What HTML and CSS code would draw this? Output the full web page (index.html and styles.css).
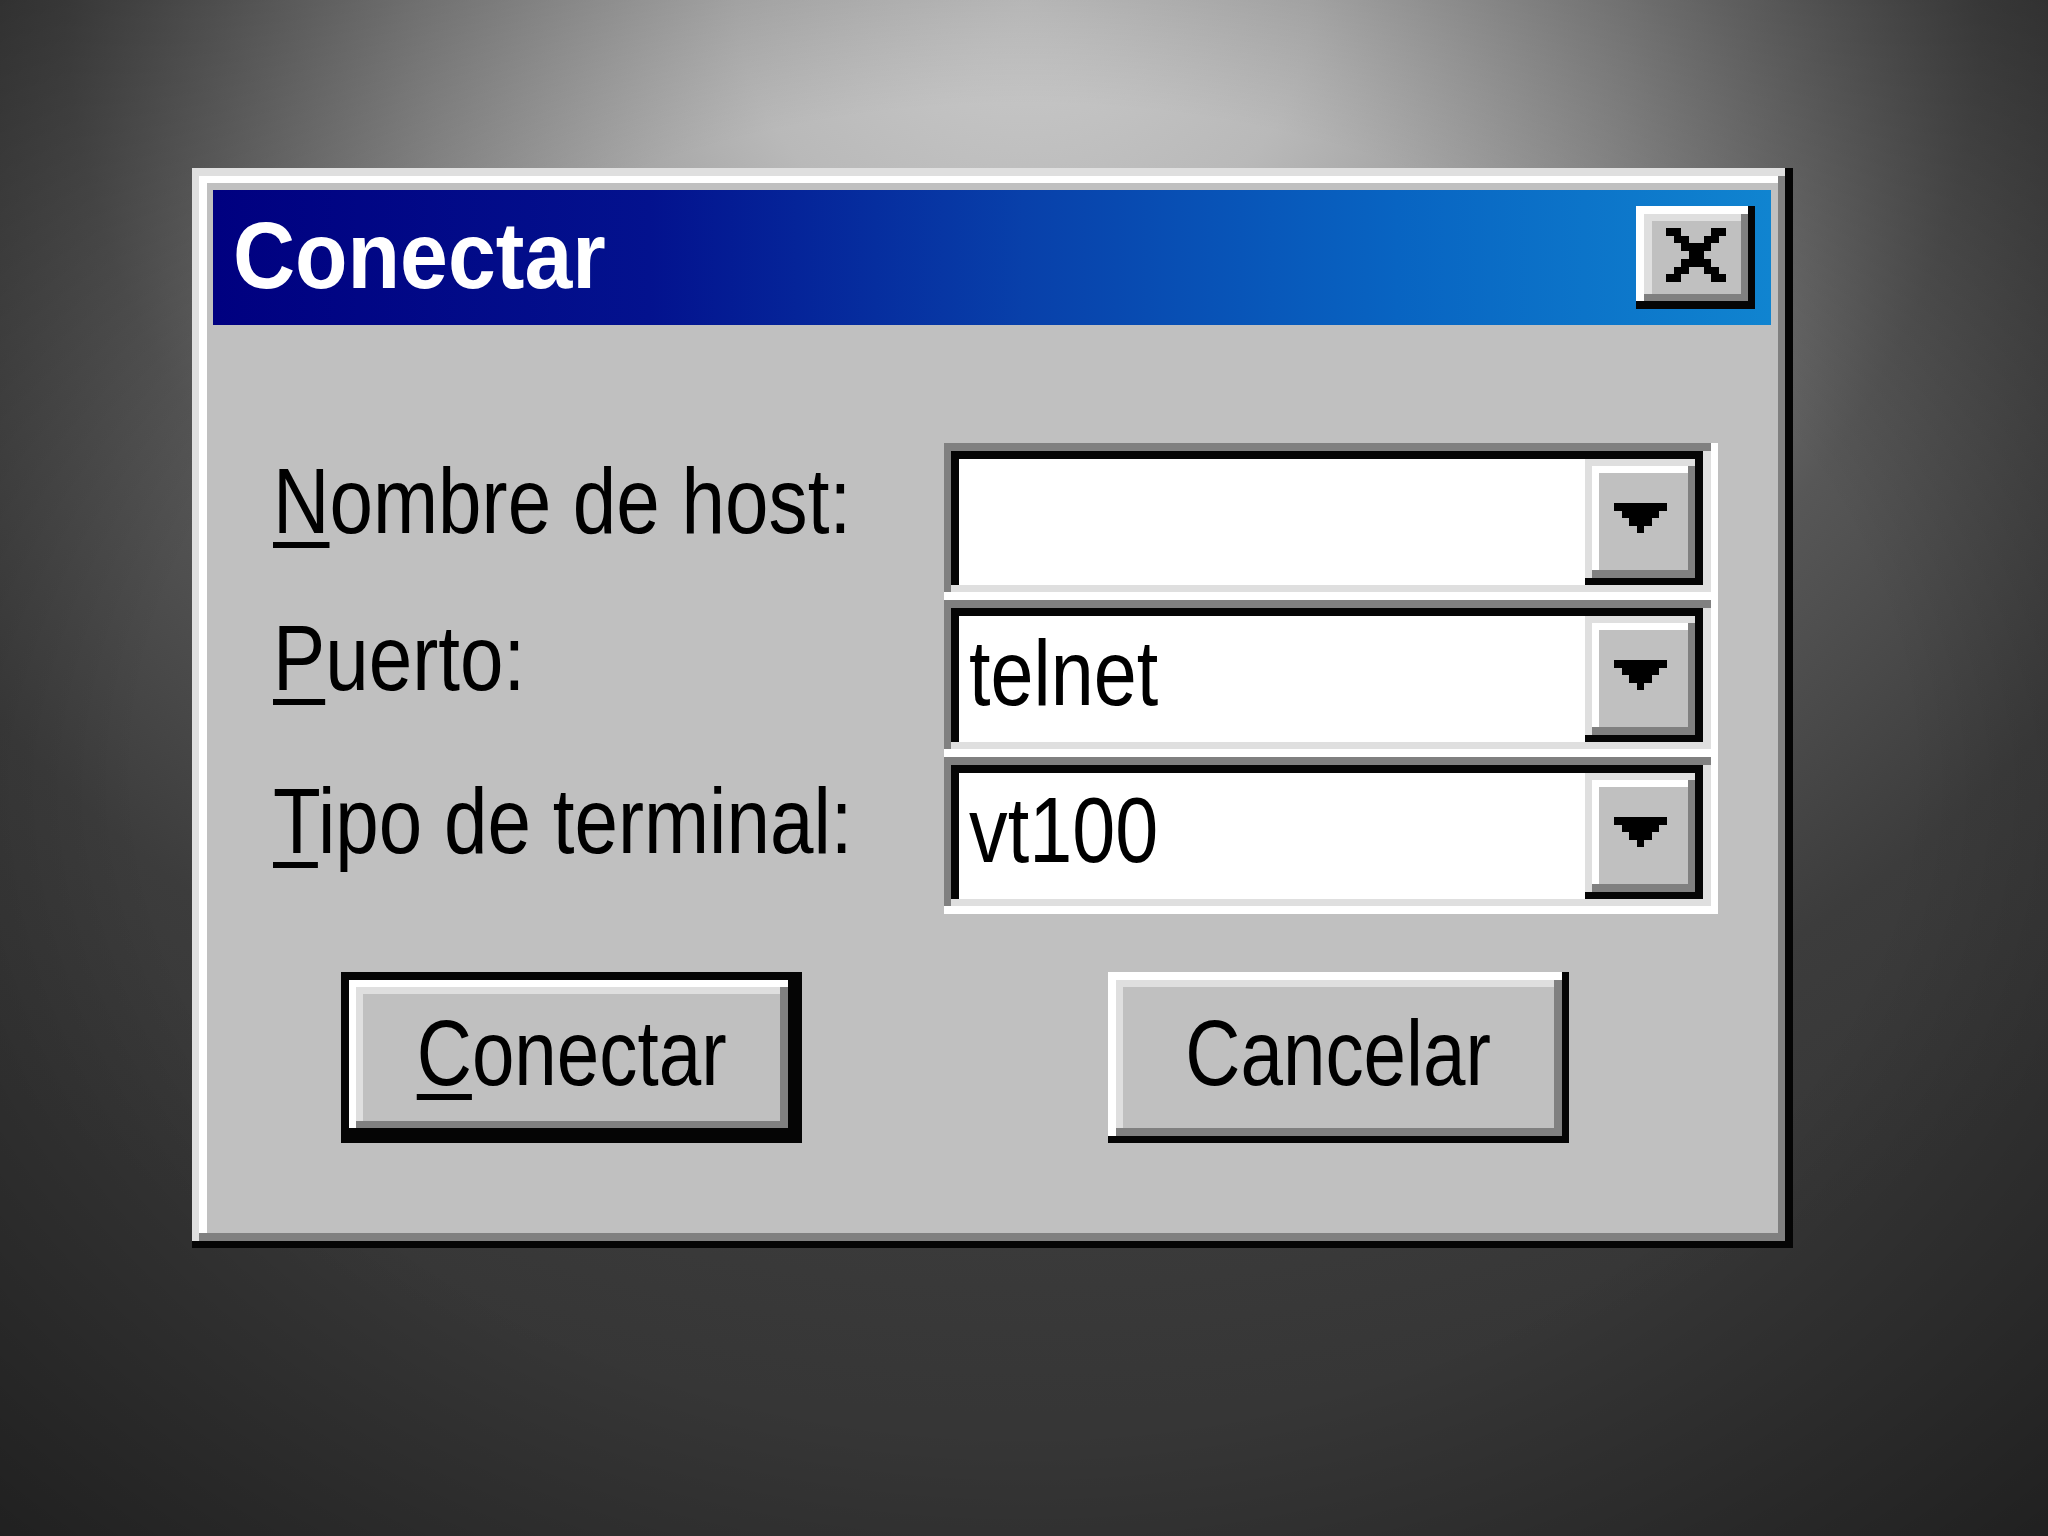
FILE: index.html
```html
<!DOCTYPE html>
<html lang="es">
<head>
<meta charset="utf-8">
<title>Conectar</title>
<link rel="stylesheet" href="styles.css">
</head>
<body>
<div class="screen">
  <div class="dialog">
    <div class="titlebar">
      <span class="title">Conectar</span>
      <button class="close" aria-label="Cerrar">
        <svg class="close-x" viewBox="0 0 8 7" width="60" height="54" preserveAspectRatio="none" shape-rendering="crispEdges">
          <path fill="#000" d="M0 0h2v1h-2z M6 0h2v1h-2z M1 1h2v1h-2z M5 1h2v1h-2z M2 2h4v1h-4z M3 3h2v1h-2z M2 4h4v1h-4z M1 5h2v1h-2z M5 5h2v1h-2z M0 6h2v1h-2z M6 6h2v1h-2z"/>
        </svg>
      </button>
    </div>
    <div class="body">
      <div class="form">
        <div class="row">
          <label class="label"><span class="label-txt"><u>N</u>ombre de host:</span></label>
          <div class="combo">
            <span class="value"></span>
            <span class="drop"><svg viewBox="0 0 7 4" width="53" height="30" preserveAspectRatio="none" shape-rendering="crispEdges"><path fill="#000" d="M0 0h7v1h-1v1h-1v1h-1v1h-1v-1h-1v-1h-1v-1h-1z"/></svg></span>
          </div>
        </div>
        <div class="row">
          <label class="label"><span class="label-txt"><u>P</u>uerto:</span></label>
          <div class="combo">
            <span class="value">telnet</span>
            <span class="drop"><svg viewBox="0 0 7 4" width="53" height="30" preserveAspectRatio="none" shape-rendering="crispEdges"><path fill="#000" d="M0 0h7v1h-1v1h-1v1h-1v1h-1v-1h-1v-1h-1v-1h-1z"/></svg></span>
          </div>
        </div>
        <div class="row row-last">
          <label class="label"><span class="label-txt"><u>T</u>ipo de terminal:</span></label>
          <div class="combo">
            <span class="value">vt100</span>
            <span class="drop"><svg viewBox="0 0 7 4" width="53" height="30" preserveAspectRatio="none" shape-rendering="crispEdges"><path fill="#000" d="M0 0h7v1h-1v1h-1v1h-1v1h-1v-1h-1v-1h-1v-1h-1z"/></svg></span>
          </div>
        </div>
      </div>
      <div class="actions">
        <button class="btn btn-default"><span class="btn-txt"><u>C</u>onectar</span></button>
        <button class="btn"><span class="btn-txt">Cancelar</span></button>
      </div>
    </div>
  </div>
</div>
</body>
</html>
```
FILE: styles.css
```css
html, body {
  margin: 0;
  padding: 0;
  height: 100%;
}

body {
  width: 2048px;
  height: 1536px;
  overflow: hidden;
  font-family: "Liberation Sans", Arial, sans-serif;
  background-color: #343434;
  background-image:
    radial-gradient(ellipse 72% 72% at 50% 50%, rgba(0,0,0,0) 60%, rgba(0,0,0,0.42) 100%),
    radial-gradient(ellipse 78% 92% at 50% 0%, #cacaca 0%, #b9b9b9 18%, #8e8e8e 38%, #575757 60%, #3c3c3c 82%, #363636 100%);
}

.screen {
  padding: 168px 0 0 192px;
}

.dialog {
  width: 1601px;
  box-sizing: border-box;
  background: #c0c0c0;
  padding: 22px 22px 15px 21px;
  box-shadow:
    inset -8px -7px 0 #050505,
    inset 7px 8px 0 #dfdfdf,
    inset -15px -15px 0 #808080,
    inset 15px 15px 0 #ffffff;
}

.titlebar {
  height: 135px;
  display: flex;
  align-items: center;
  justify-content: space-between;
  background: linear-gradient(90deg, #000080 0%, #03128e 28%, #0840aa 52%, #0864c2 76%, #1084d0 100%);
  padding: 0 16px 0 20px;
}

.title {
  display: inline-block;
  color: #fff;
  font-weight: bold;
  font-size: 95px;
  line-height: 1;
  transform: scaleX(0.905);
  transform-origin: left center;
  margin-top: -4px;
}

.close {
  width: 119px;
  height: 103px;
  border: 0;
  padding: 0 0 6px 0;
  margin: 0;
  background: #c0c0c0;
  display: flex;
  align-items: center;
  justify-content: center;
  box-shadow:
    inset -7px -8px 0 #050505,
    inset 8px 8px 0 #ffffff,
    inset -14px -15px 0 #808080,
    inset 16px 15px 0 #dfdfdf;
}

.close-x {
  display: block;
}

.body {
  padding: 118px 0 90px 60px;
}

.form {
  display: flex;
  flex-direction: column;
}

.row {
  display: grid;
  grid-template-columns: 671px 774px;
  height: 157px;
}

.label {
  padding-top: 12px;
  font-size: 92px;
  line-height: 1;
  color: #000;
}

.row-last .label {
  padding-top: 18px;
}

.label-txt {
  display: inline-block;
  white-space: nowrap;
  transform: scaleX(0.85);
  transform-origin: left top;
}

u {
  text-decoration: underline;
  text-decoration-thickness: 6px;
  text-underline-offset: 9px;
}

.combo {
  display: flex;
  align-items: stretch;
  background: #fff;
  padding: 16px 15px 15px 15px;
  box-shadow:
    inset -7px -8px 0 #ffffff,
    inset 7px 8px 0 #808080,
    inset -15px -15px 0 #dfdfdf,
    inset 15px 16px 0 #050505;
}

.value {
  flex: 1;
  align-self: flex-start;
  margin-top: 11px;
  padding-left: 12px;
  font-size: 92px;
  line-height: 1;
  color: #000;
  white-space: nowrap;
  transform: scaleX(0.84);
  transform-origin: left top;
}

.drop {
  width: 118px;
  background: #c0c0c0;
  display: flex;
  align-items: center;
  justify-content: center;
  padding: 0 8px 8px 0;
  box-sizing: border-box;
  box-shadow:
    inset -8px -7px 0 #050505,
    inset 7px 7px 0 #dfdfdf,
    inset -15px -15px 0 #808080,
    inset 14px 14px 0 #ffffff;
}

.drop svg {
  display: block;
}

.actions {
  display: flex;
  gap: 306px;
  margin-top: 58px;
  padding-left: 68px;
}

.btn {
  width: 461px;
  height: 171px;
  border: 0;
  margin: 0;
  padding: 0 0 9px 0;
  background: #c0c0c0;
  font-family: "Liberation Sans", Arial, sans-serif;
  font-size: 92px;
  line-height: 1;
  color: #000;
  display: flex;
  align-items: center;
  justify-content: center;
  box-shadow:
    inset -7px -7px 0 #050505,
    inset 8px 8px 0 #ffffff,
    inset -15px -15px 0 #808080,
    inset 15px 15px 0 #dfdfdf;
}

.btn-default {
  box-shadow:
    inset 0 0 0 8px #050505,
    inset -14px -15px 0 #050505,
    inset 15px 15px 0 #ffffff,
    inset -22px -22px 0 #808080,
    inset 22px 22px 0 #dfdfdf;
}

.btn-txt {
  display: inline-block;
  white-space: nowrap;
  transform: scaleX(0.83);
  transform-origin: center center;
}
```
